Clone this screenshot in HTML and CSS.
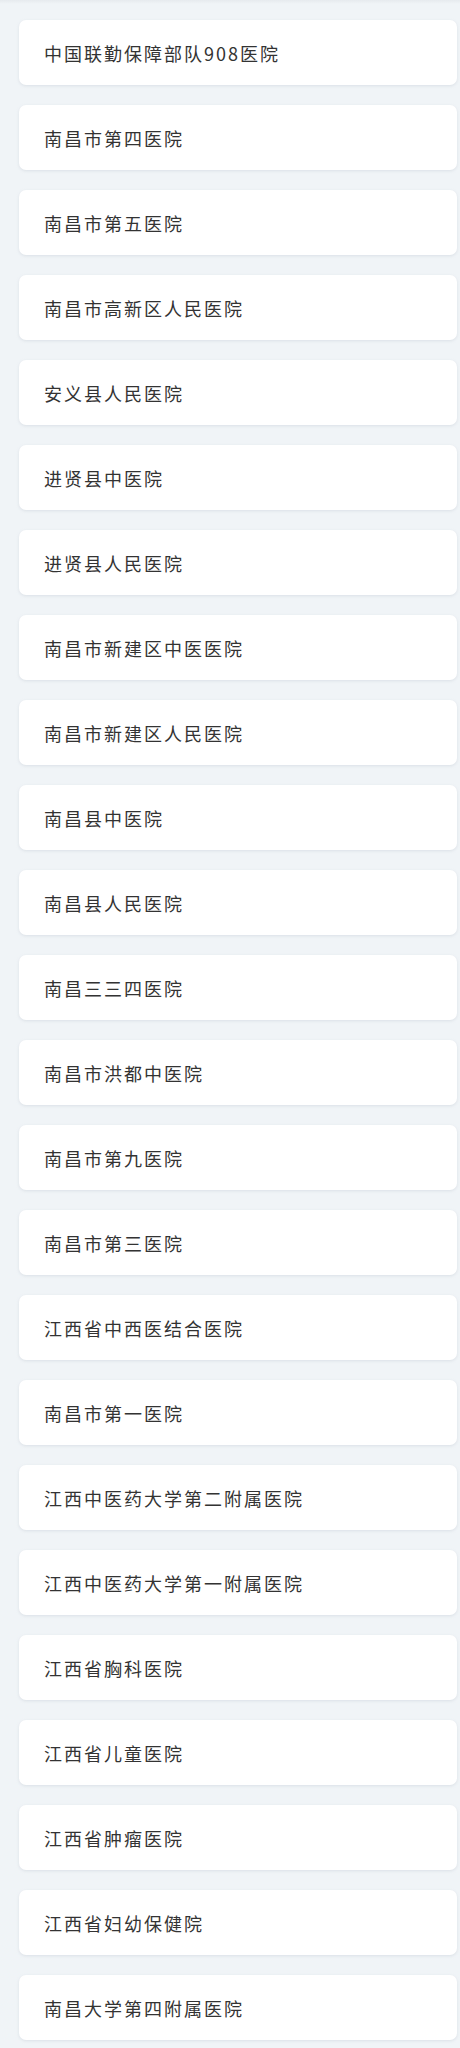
FILE: index.html
```html
<!DOCTYPE html>
<html lang="zh-CN">
<head>
<meta charset="utf-8">
<title>医院列表</title>
<link rel="stylesheet" href="styles.css">
</head>
<body>
<div class="list">
  <div class="card">中国联勤保障部队908医院</div>
  <div class="card">南昌市第四医院</div>
  <div class="card">南昌市第五医院</div>
  <div class="card">南昌市高新区人民医院</div>
  <div class="card">安义县人民医院</div>
  <div class="card">进贤县中医院</div>
  <div class="card">进贤县人民医院</div>
  <div class="card">南昌市新建区中医医院</div>
  <div class="card">南昌市新建区人民医院</div>
  <div class="card">南昌县中医院</div>
  <div class="card">南昌县人民医院</div>
  <div class="card">南昌三三四医院</div>
  <div class="card">南昌市洪都中医院</div>
  <div class="card">南昌市第九医院</div>
  <div class="card">南昌市第三医院</div>
  <div class="card">江西省中西医结合医院</div>
  <div class="card">南昌市第一医院</div>
  <div class="card">江西中医药大学第二附属医院</div>
  <div class="card">江西中医药大学第一附属医院</div>
  <div class="card">江西省胸科医院</div>
  <div class="card">江西省儿童医院</div>
  <div class="card">江西省肿瘤医院</div>
  <div class="card">江西省妇幼保健院</div>
  <div class="card">南昌大学第四附属医院</div>
</div>
</body>
</html>
```
FILE: styles.css
```css
html, body {
  margin: 0;
  padding: 0;
}
body {
  background: #f0f4f7;
  font-family: "Noto Sans CJK SC", "Noto Sans", sans-serif;
}
.list {
  display: flex;
  flex-direction: column;
  gap: 20px;
  padding: 20px 3px 20px 19px;
  background: linear-gradient(to bottom, #e6eaee 0, #f0f4f7 4px, #f0f4f7 100%);
}
.card {
  height: 65px;
  box-sizing: border-box;
  display: flex;
  align-items: center;
  padding: 1px 0 0 25px;
  background: #ffffff;
  border-radius: 7px;
  box-shadow: 0 1px 3px rgba(180, 190, 200, 0.35);
  color: #333333;
  font-size: 18px;
  letter-spacing: 2px;
}
```
